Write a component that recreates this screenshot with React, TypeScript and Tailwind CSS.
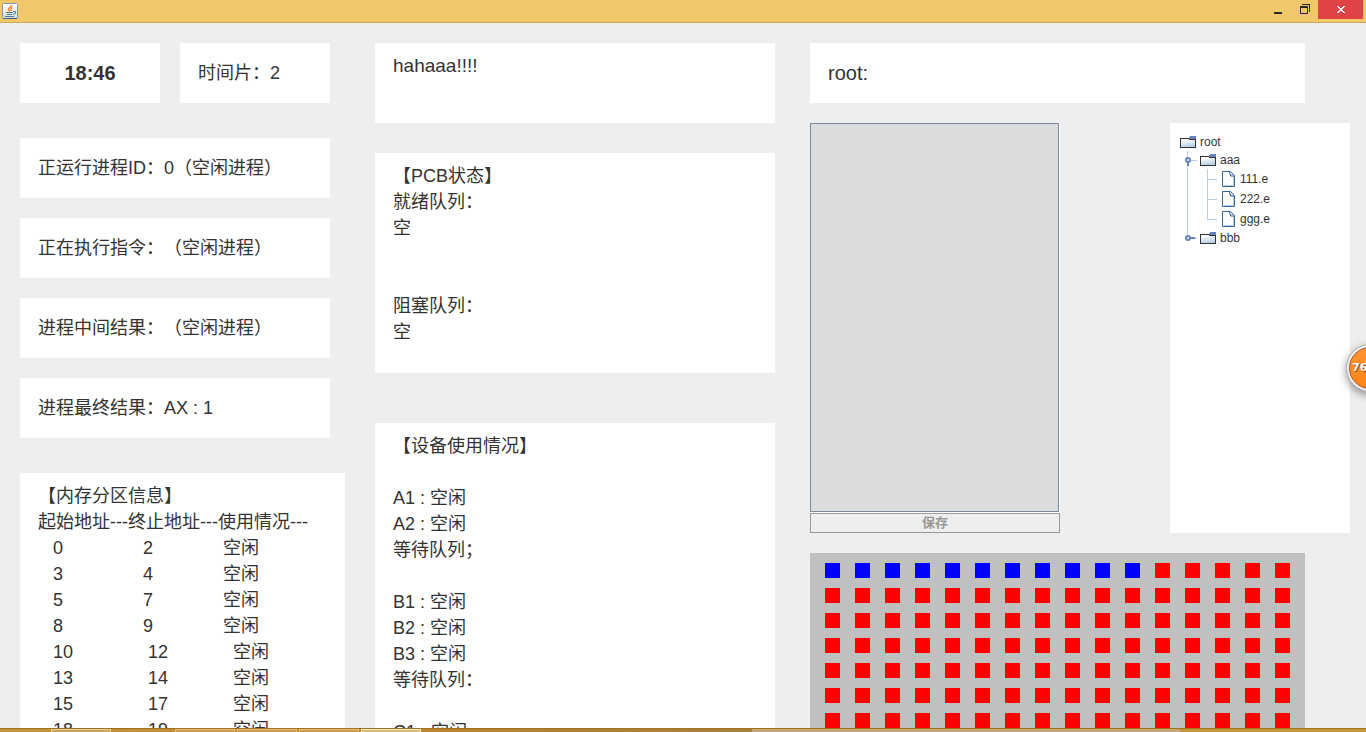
import { useState } from "react";

type MemoryRow = {
  start: number;
  end: number;
  state: string;
};

type TreeRow = {
  label: string;
  kind: "folder" | "file";
  depth: number;
  expanded?: boolean;
  last?: boolean;
};

const memoryRows: MemoryRow[] = [
  { start: 0, end: 2, state: "空闲" },
  { start: 3, end: 4, state: "空闲" },
  { start: 5, end: 7, state: "空闲" },
  { start: 8, end: 9, state: "空闲" },
  { start: 10, end: 12, state: "空闲" },
  { start: 13, end: 14, state: "空闲" },
  { start: 15, end: 17, state: "空闲" },
  { start: 18, end: 19, state: "空闲" },
];

const pcbLines = ["【PCB状态】", "就绪队列：", "空", "", "", "阻塞队列：", "空"];

const deviceLines = [
  "【设备使用情况】",
  "",
  "A1 : 空闲",
  "A2 : 空闲",
  "等待队列；",
  "",
  "B1 : 空闲",
  "B2 : 空闲",
  "B3 : 空闲",
  "等待队列：",
  "",
  "C1 : 空闲",
];

const treeRows: TreeRow[] = [
  { label: "root", kind: "folder", depth: 0 },
  { label: "aaa", kind: "folder", depth: 1, expanded: true },
  { label: "111.e", kind: "file", depth: 2 },
  { label: "222.e", kind: "file", depth: 2 },
  { label: "ggg.e", kind: "file", depth: 2, last: true },
  { label: "bbb", kind: "folder", depth: 1, last: true },
];

const USED_BLOCKS = 11;
const TOTAL_BLOCKS = 128;

function JavaIcon() {
  return (
    <svg width="16" height="16" viewBox="0 0 16 16" aria-hidden="true">
      <defs>
        <linearGradient id="java-bg" x1="0" y1="0" x2="0" y2="1">
          <stop offset="0" stopColor="#ffffff" />
          <stop offset="1" stopColor="#d5dade" />
        </linearGradient>
      </defs>
      <rect x="0.5" y="0.5" width="15" height="15" rx="1" fill="url(#java-bg)" stroke="#7f9ab0" />
      <path d="M1 15.5h14" stroke="#3f5f7c" />
      <path d="M9.500 2C9.500 4 6 5 6.500 6.500 6.800 7.300 7.500 7.500 7.500 8.500M10.500 4.500C8 5.500 8.500 6.500 9.500 8" fill="none" stroke="#ea7d24" strokeWidth="1.300" />
      <path d="M4 9.500h7M5 11.500h5M3 13.500h9M11 8.500h2.500v2l-2.500 1" fill="none" stroke="#53789b" />
    </svg>
  );
}

function TitleBar() {
  return (
    <header className="flex h-[23px] shrink-0 items-start justify-between border-b border-[#cda95b] bg-[#f0c869] pl-0.5 pr-[3px]">
      <div className="pt-[3px]">
        <JavaIcon />
      </div>
      <div className="flex">
        <button type="button" aria-label="最小化" className="flex h-[19px] w-[26px] items-center justify-center">
          <svg width="16" height="16" viewBox="0 0 16 16">
            <path d="M4 10h8v2H4z" fill="#2a2a2a" />
          </svg>
        </button>
        <button type="button" aria-label="还原" className="flex h-[19px] w-[27px] items-center justify-center">
          <svg width="16" height="16" viewBox="0 0 16 16" shapeRendering="crispEdges">
            <path d="M3 4h8v8H3zM4 6v5h6V6zM5 2h8v8h-1V3H5z" fill="#2a2a2a" fillRule="evenodd" />
          </svg>
        </button>
        <button type="button" aria-label="关闭" className="flex h-[19px] w-[45px] items-center justify-center bg-[#e04343]">
          <svg width="8" height="7" viewBox="0 0 8 7" shapeRendering="crispEdges">
            <path
              d="M0 0h2v1h1v1h2V1h1V0h2v1H7v1H6v1H5v1h1v1h1v1h1v1H6V6H5V5H3v1H2v1H0V6h1V5h1V4h1V3H2V2H1V1H0z"
              fill="#fff"
            />
          </svg>
        </button>
      </div>
    </header>
  );
}

function InfoCard({ text }: { text: string }) {
  return <div className="flex h-15 items-center bg-white px-[18px]">{text}</div>;
}

function Lines({ lines }: { lines: string[] }) {
  return (
    <>
      {lines.map((line, i) => (
        <p key={i} className="h-[26px] whitespace-pre">
          {line}
        </p>
      ))}
    </>
  );
}

function MemoryTable() {
  return (
    <section className="mt-[35px] bg-white px-[18px] pt-2.5">
      <table className="border-collapse text-left">
        <caption className="h-[26px] text-left">【内存分区信息】</caption>
        <thead>
          <tr>
            <th className="w-[90px] p-0 font-normal whitespace-nowrap">起始地址---</th>
            <th className="w-[90px] p-0 font-normal whitespace-nowrap">终止地址---</th>
            <th className="w-[90px] p-0 font-normal whitespace-nowrap">使用情况---</th>
          </tr>
        </thead>
        <tbody>
          {memoryRows.map((row) => (
            <tr key={row.start}>
              <td className="p-0 pl-[15px]">{row.start}</td>
              <td className={row.end > 9 ? "p-0 pl-5" : "p-0 pl-[15px]"}>{row.end}</td>
              <td className={row.start > 9 ? "p-0 pl-[15px]" : "p-0 pl-[5px]"}>{row.state}</td>
            </tr>
          ))}
        </tbody>
      </table>
    </section>
  );
}

function FolderIcon() {
  return (
    <svg width="16" height="18" viewBox="0 0 16 18" shapeRendering="crispEdges" aria-hidden="true">
      <defs>
        <linearGradient id="folder-bg" x1="0" y1="0" x2="0.300" y2="1">
          <stop offset="0.200" stopColor="#ffffff" />
          <stop offset="1" stopColor="#b8cfe5" />
        </linearGradient>
      </defs>
      <path d="M0.500 5.500h8l1 1h6v8h-15z" fill="url(#folder-bg)" stroke="#333" />
      <path d="M10 3h6v3h-7V4h1z" fill="#6382bf" />
    </svg>
  );
}

function FileIcon() {
  return (
    <svg width="16" height="20" viewBox="0 0 16 20" aria-hidden="true">
      <path d="M2.500 2.500h8l4 4v11h-12z" fill="#fff" stroke="#336699" />
      <path d="M4 16.500h9.500V7" fill="none" stroke="#b8cfe5" />
      <path d="M9.500 3l1 4h3.500" fill="#b8cfe5" stroke="#336699" />
    </svg>
  );
}

function TreeGuide({ row }: { row: TreeRow }) {
  if (row.depth === 0) return null;
  if (row.kind === "file") {
    return (
      <svg width="40" height="20" viewBox="0 0 40 20" shapeRendering="crispEdges" aria-hidden="true">
        <path d={row.last ? "M7.500 0v20M27.500 0v10.500H37" : "M7.500 0v20M27.500 0v20M27.500 10.500H37"} fill="none" stroke="#b8cfe5" />
      </svg>
    );
  }
  return (
    <svg width="20" height="18" viewBox="0 0 20 18" aria-hidden="true">
      <path d={row.last ? "M7.500 0v9" : "M7.500 0v18"} stroke="#b8cfe5" />
      <path d="M10 9.500h7" stroke="#b8cfe5" />
      <path d={row.expanded ? "M8 9v6" : "M8 9h7"} stroke="#6382bf" strokeWidth="2" />
      <circle cx="8" cy="9" r="2" fill="#fff" stroke="#6382bf" strokeWidth="2" />
    </svg>
  );
}

function FileTree() {
  return (
    <ul className="w-[180px] bg-white px-2.5 pt-2.5 text-xs">
      {treeRows.map((row) => (
        <li key={row.label} className="flex items-center">
          <TreeGuide row={row} />
          {row.kind === "folder" ? <FolderIcon /> : <FileIcon />}
          <span className="pl-1 leading-[18px]">{row.label}</span>
        </li>
      ))}
    </ul>
  );
}

function DiskMap() {
  return (
    <div className="mr-[45px] mt-5 grid grid-cols-16 gap-y-2.5 bg-[#c0c0c0] px-[7px] py-2.5">
      {Array.from({ length: TOTAL_BLOCKS }, (_, i) => (
        <span key={i} className={i < USED_BLOCKS ? "mx-auto size-[15px] bg-[#0000ff]" : "mx-auto size-[15px] bg-[#ff0000]"} />
      ))}
    </div>
  );
}

function Taskbar() {
  return (
    <footer className="grid h-1 shrink-0 grid-cols-[752fr_428fr_186fr] border-t border-[#a4701c]">
      <div className="flex gap-0.5 bg-linear-to-r from-[#c29540] via-[#bd842a] to-[#a28040] pl-[51px]">
        <span className="w-[60px] border border-b-0 border-[#e8cf94] bg-[#c8a560]" />
        <span className="ml-[62px] w-[60px] border border-b-0 border-[#e5c27c] bg-[#c89a50]" />
        <span className="w-[60px] border border-b-0 border-[#e5c27c] bg-[#c89a50]" />
        <span className="w-[60px] border border-b-0 border-[#e5c27c] bg-[#c89a50]" />
        <span className="w-[60px] border border-b-0 border-[#fff0c8] bg-[#d8b878]" />
      </div>
      <div className="bg-[#c3a877]" />
      <div className="bg-[#c4983a]" />
    </footer>
  );
}

export default function App() {
  const [content, setContent] = useState("");

  return (
    <div className="relative flex h-screen flex-col overflow-hidden bg-[#eeeeee] font-['Liberation_Sans','Noto_Sans_CJK_SC',sans-serif] text-[18px] leading-[26px] text-[#333333] [text-spacing-trim:space-all]">
      <TitleBar />
      <main className="flex min-h-0 flex-1 items-start overflow-hidden pl-5 pr-4 pt-5">
        <div className="min-w-0 flex-[325]">
          <div className="mr-[15px] flex flex-col gap-5">
            <div className="mb-[15px] grid grid-cols-[140fr_150fr] gap-5">
              <div className="flex h-15 items-center justify-center bg-white text-xl font-bold">18:46</div>
              <InfoCard text="时间片：2" />
            </div>
            <InfoCard text="正运行进程ID：0（空闲进程）" />
            <InfoCard text="正在执行指令：（空闲进程）" />
            <InfoCard text="进程中间结果：（空闲进程）" />
            <InfoCard text="进程最终结果：AX : 1" />
          </div>
          <MemoryTable />
        </div>

        <div className="ml-[30px] min-w-0 flex-[400]">
          <div className="h-20 bg-white px-[18px] pt-2.5 text-[19px]">hahaaa!!!!</div>
          <section className="mt-[30px] h-[220px] bg-white px-[18px] pt-2.5">
            <Lines lines={pcbLines} />
          </section>
          <section className="mt-[50px] bg-white px-[18px] pt-2.5">
            <Lines lines={deviceLines} />
          </section>
        </div>

        <div className="ml-[35px] min-w-0 flex-[540]">
          <div className="mr-[45px] flex h-15 items-center bg-white px-[18px] text-xl">root:</div>
          <div className="mt-5 flex h-[410px] justify-between">
            <div className="flex w-[250px] flex-col">
              <div className="flex flex-1 border-b border-r border-white">
                <textarea
                  aria-label="文件内容"
                  value={content}
                  onChange={(e) => setContent(e.target.value)}
                  className="w-full resize-none border border-[#7a8a99] bg-[#dcdcdc] p-1 text-sm outline-none"
                />
              </div>
              <button type="button" disabled className="flex h-5 items-center justify-center border border-[#999999] text-[13px] font-bold text-[#999999]">
                保存
              </button>
            </div>
            <FileTree />
          </div>
          <DiskMap />
        </div>
      </main>
      <Taskbar />

      <div className="absolute -right-7 top-[344px] flex size-12 items-center rounded-full border border-[#b0b0b0] bg-[#f0f0f0] p-0.5 shadow-[0_3px_8px_rgba(0,0,0,0.4)]">
        <div className="flex size-full items-center rounded-full border border-[#b5501c] bg-linear-to-b from-[#ff9434] to-[#ff8412] pl-0.5 font-['DejaVu_Sans'] text-[11px] font-bold text-white text-shadow-[1px_1px_0_#a04a10]">
          76
        </div>
      </div>
    </div>
  );
}
